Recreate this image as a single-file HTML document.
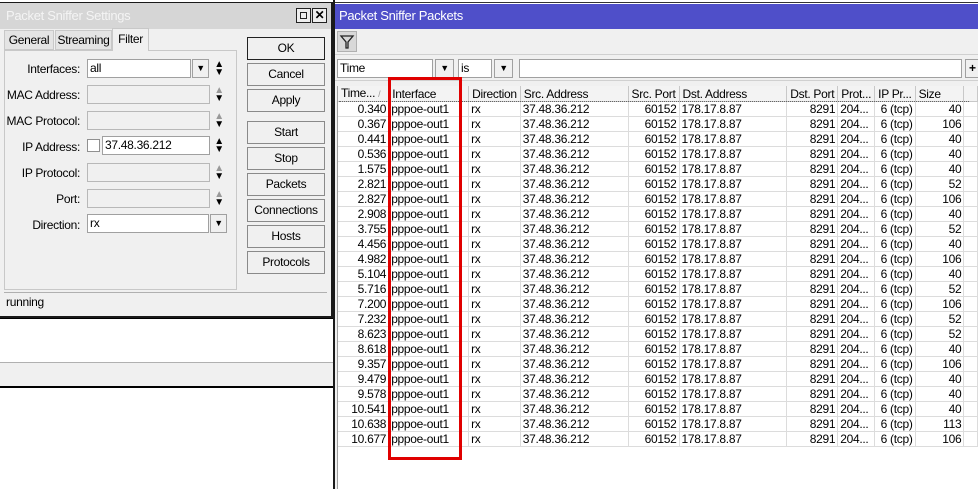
<!DOCTYPE html>
<html><head><meta charset="utf-8"><style>
*{box-sizing:border-box;margin:0;padding:0}
body{width:978px;height:489px;overflow:hidden;background:#fff;font-family:"Liberation Sans",sans-serif;font-size:12px;color:#000;position:relative;letter-spacing:-0.3px}
.a{position:absolute}
.btn{position:absolute;left:247px;width:78px;height:23px;border:1px solid #8a8a8a;background:#f0f0f0;text-align:center;line-height:21px}
.lbl{position:absolute;width:80px;text-align:right;left:0}
.fld{position:absolute;height:19px;border:1px solid #b8b8b8;background:#f0f0f0}
.fw{background:#fff;border-color:#a0a0a0;padding-left:2px;line-height:17px}
.dd{position:absolute;width:17px;height:19px;border:1px solid #a0a0a0;background:#f0f0f0;text-align:center;font-size:9px;line-height:17px}
.ud{position:absolute;font-size:10px;line-height:8px;width:12px;text-align:center}
table{border-collapse:collapse;position:absolute;left:338px;top:86px;table-layout:fixed}
td{height:15px;padding:0 2px;white-space:nowrap;overflow:hidden;border-right:1px solid #dcdcdc;border-bottom:1px solid #dcdcdc;line-height:14px}
th{height:15px;font-weight:normal;text-align:left;padding:0 3px;border-right:1px solid #c8c8c8;border-bottom:1px solid #c8c8c8;background:#f3f3f3;line-height:14px;white-space:nowrap;overflow:hidden}
.r{text-align:right}
</style></head><body>
<div class="a" style="left:0;top:318px;width:333px;height:1px;background:#000"></div>
<div class="a" style="left:0;top:362px;width:333px;height:25px;background:#f0f0f0;border-top:1px solid #b0b0b0"></div>
<div class="a" style="left:0;top:386px;width:333px;height:2px;background:#000"></div>

<div class="a" style="left:0;top:2px;width:333px;height:316px;background:#f0f0f0;border:2px solid #1a1a1a;border-left:none;border-top:1px solid #1a1a1a"></div>
<div class="a" style="left:0;top:3px;width:331px;height:26px;background:#d6d6d6;color:#f4f4f4;font-size:13px;line-height:26px;padding-left:6px">Packet Sniffer Settings</div>
<div class="a" style="left:296px;top:8px;width:15px;height:15px;border:1px solid #222;background:#eee"><div style="margin:3px;width:7px;height:7px;border:1px solid #222"></div></div>
<div class="a" style="left:312px;top:8px;width:15px;height:15px;border:1px solid #222;background:#eee;font-weight:bold;text-align:center;line-height:13px;font-size:12px">✕</div>
<div class="a" style="left:4px;top:30px;width:50px;height:20px;border:1px solid #c8c8c8;background:#e4e4e4;line-height:19px;text-align:center">General</div>
<div class="a" style="left:55px;top:30px;width:57px;height:20px;border:1px solid #c8c8c8;background:#e4e4e4;line-height:19px;text-align:center">Streaming</div>
<div class="a" style="left:112px;top:28px;width:37px;height:23px;border:1px solid #c8c8c8;border-bottom:none;background:#f0f0f0;line-height:20px;text-align:center">Filter</div>
<div class="a" style="left:4px;top:50px;width:233px;height:240px;border:1px solid #c8c8c8;border-top:none"></div>
<div class="a" style="left:4px;top:50px;width:108px;height:1px;background:#c8c8c8"></div>
<div class="a" style="left:149px;top:50px;width:88px;height:1px;background:#c8c8c8"></div>

<div class="lbl" style="top:62px">Interfaces:</div>
<div class="fld fw" style="left:87px;top:59px;width:104px">all</div>
<div class="dd" style="left:192px;top:59px">▼</div>
<div class="ud" style="left:213px;top:61px">▲<br>▼</div>

<div class="lbl" style="top:88px">MAC Address:</div>
<div class="fld" style="left:87px;top:85px;width:123px"></div>
<div class="ud" style="left:213px;top:87px;color:#999">▲<br><span style="color:#000">▼</span></div>

<div class="lbl" style="top:114px">MAC Protocol:</div>
<div class="fld" style="left:87px;top:111px;width:123px"></div>
<div class="ud" style="left:213px;top:113px;color:#999">▲<br><span style="color:#000">▼</span></div>

<div class="lbl" style="top:140px">IP Address:</div>
<div class="a" style="left:87px;top:139px;width:13px;height:13px;border:1px solid #909090;background:#fff"></div>
<div class="fld fw" style="left:102px;top:136px;width:108px">37.48.36.212</div>
<div class="ud" style="left:213px;top:138px">▲<br>▼</div>

<div class="lbl" style="top:166px">IP Protocol:</div>
<div class="fld" style="left:87px;top:163px;width:123px"></div>
<div class="ud" style="left:213px;top:165px;color:#999">▲<br><span style="color:#000">▼</span></div>

<div class="lbl" style="top:192px">Port:</div>
<div class="fld" style="left:87px;top:189px;width:123px"></div>
<div class="ud" style="left:213px;top:191px;color:#999">▲<br><span style="color:#000">▼</span></div>

<div class="lbl" style="top:218px">Direction:</div>
<div class="fld fw" style="left:87px;top:214px;width:122px">rx</div>
<div class="dd" style="left:210px;top:214px">▼</div>

<div class="btn" style="top:37px;border:1px solid #222">OK</div>
<div class="btn" style="top:63px">Cancel</div>
<div class="btn" style="top:89px">Apply</div>
<div class="btn" style="top:121px">Start</div>
<div class="btn" style="top:147px">Stop</div>
<div class="btn" style="top:173px">Packets</div>
<div class="btn" style="top:199px">Connections</div>
<div class="btn" style="top:225px">Hosts</div>
<div class="btn" style="top:251px">Protocols</div>

<div class="a" style="left:4px;top:292px;width:323px;height:20px;border-top:1px solid #b0b0b0;background:#f0f0f0;padding-left:2px;line-height:19px">running</div>

<div class="a" style="left:333px;top:0;width:645px;height:489px;background:#fff;border-left:2px solid #1a1a1a"></div>
<div class="a" style="left:335px;top:0;width:643px;height:3px;background:#fff;border-bottom:1px solid #333"></div>
<div class="a" style="left:335px;top:4px;width:643px;height:25px;background:#4f4fc9;color:#fff;font-size:13px;line-height:24px;padding-left:4px">Packet Sniffer Packets</div>
<div class="a" style="left:335px;top:29px;width:643px;height:57px;background:#f0f0f0"></div>
<div class="a" style="left:337px;top:31px;width:20px;height:21px;background:#d8d8d8;border:1px solid #b0b0b0"><svg width="18" height="19" viewBox="0 0 18 19"><path d="M3 4h12l-5 6v6h-2v-6z" fill="none" stroke="#222" stroke-width="1.3"/></svg></div>
<div class="a" style="left:335px;top:54px;width:643px;height:1px;background:#d0d0d0"></div>
<div class="fld fw" style="left:337px;top:59px;width:96px">Time</div>
<div class="dd" style="left:435px;top:59px;width:19px">▼</div>
<div class="fld fw" style="left:458px;top:59px;width:34px">is</div>
<div class="dd" style="left:494px;top:59px;width:19px">▼</div>
<div class="fld fw" style="left:519px;top:59px;width:443px"></div>
<div class="a" style="left:965px;top:59px;width:15px;height:19px;border:1px solid #a0a0a0;background:#f0f0f0;font-weight:bold;line-height:17px;padding-left:3px">+</div>
<div class="a" style="left:335px;top:80px;width:643px;height:1px;background:#d0d0d0"></div>
<div class="a" style="left:335px;top:86px;width:3px;height:403px;background:#f0f0f0;border-right:1px solid #a0a0a0"></div>

<table>
<colgroup><col style="width:51px"><col style="width:81px"><col style="width:50px"><col style="width:110px"><col style="width:51px"><col style="width:110px"><col style="width:49px"><col style="width:35px"><col style="width:40px"><col style="width:50px"><col style="width:14px"></colgroup>
<tr><th>Time... <span style="color:#999;font-size:9px">/</span></th><th>Interface</th><th>Direction</th><th>Src. Address</th><th>Src. Port</th><th>Dst. Address</th><th>Dst. Port</th><th>Prot...</th><th>IP Pr...</th><th>Size</th><th></th></tr>
<tr><td class="r">0.340</td><td>pppoe-out1</td><td>rx</td><td>37.48.36.212</td><td class="r">60152</td><td>178.17.8.87</td><td class="r">8291</td><td>204...</td><td class="r">6 (tcp)</td><td class="r">40</td><td></td></tr>
<tr><td class="r">0.367</td><td>pppoe-out1</td><td>rx</td><td>37.48.36.212</td><td class="r">60152</td><td>178.17.8.87</td><td class="r">8291</td><td>204...</td><td class="r">6 (tcp)</td><td class="r">106</td><td></td></tr>
<tr><td class="r">0.441</td><td>pppoe-out1</td><td>rx</td><td>37.48.36.212</td><td class="r">60152</td><td>178.17.8.87</td><td class="r">8291</td><td>204...</td><td class="r">6 (tcp)</td><td class="r">40</td><td></td></tr>
<tr><td class="r">0.536</td><td>pppoe-out1</td><td>rx</td><td>37.48.36.212</td><td class="r">60152</td><td>178.17.8.87</td><td class="r">8291</td><td>204...</td><td class="r">6 (tcp)</td><td class="r">40</td><td></td></tr>
<tr><td class="r">1.575</td><td>pppoe-out1</td><td>rx</td><td>37.48.36.212</td><td class="r">60152</td><td>178.17.8.87</td><td class="r">8291</td><td>204...</td><td class="r">6 (tcp)</td><td class="r">40</td><td></td></tr>
<tr><td class="r">2.821</td><td>pppoe-out1</td><td>rx</td><td>37.48.36.212</td><td class="r">60152</td><td>178.17.8.87</td><td class="r">8291</td><td>204...</td><td class="r">6 (tcp)</td><td class="r">52</td><td></td></tr>
<tr><td class="r">2.827</td><td>pppoe-out1</td><td>rx</td><td>37.48.36.212</td><td class="r">60152</td><td>178.17.8.87</td><td class="r">8291</td><td>204...</td><td class="r">6 (tcp)</td><td class="r">106</td><td></td></tr>
<tr><td class="r">2.908</td><td>pppoe-out1</td><td>rx</td><td>37.48.36.212</td><td class="r">60152</td><td>178.17.8.87</td><td class="r">8291</td><td>204...</td><td class="r">6 (tcp)</td><td class="r">40</td><td></td></tr>
<tr><td class="r">3.755</td><td>pppoe-out1</td><td>rx</td><td>37.48.36.212</td><td class="r">60152</td><td>178.17.8.87</td><td class="r">8291</td><td>204...</td><td class="r">6 (tcp)</td><td class="r">52</td><td></td></tr>
<tr><td class="r">4.456</td><td>pppoe-out1</td><td>rx</td><td>37.48.36.212</td><td class="r">60152</td><td>178.17.8.87</td><td class="r">8291</td><td>204...</td><td class="r">6 (tcp)</td><td class="r">40</td><td></td></tr>
<tr><td class="r">4.982</td><td>pppoe-out1</td><td>rx</td><td>37.48.36.212</td><td class="r">60152</td><td>178.17.8.87</td><td class="r">8291</td><td>204...</td><td class="r">6 (tcp)</td><td class="r">106</td><td></td></tr>
<tr><td class="r">5.104</td><td>pppoe-out1</td><td>rx</td><td>37.48.36.212</td><td class="r">60152</td><td>178.17.8.87</td><td class="r">8291</td><td>204...</td><td class="r">6 (tcp)</td><td class="r">40</td><td></td></tr>
<tr><td class="r">5.716</td><td>pppoe-out1</td><td>rx</td><td>37.48.36.212</td><td class="r">60152</td><td>178.17.8.87</td><td class="r">8291</td><td>204...</td><td class="r">6 (tcp)</td><td class="r">52</td><td></td></tr>
<tr><td class="r">7.200</td><td>pppoe-out1</td><td>rx</td><td>37.48.36.212</td><td class="r">60152</td><td>178.17.8.87</td><td class="r">8291</td><td>204...</td><td class="r">6 (tcp)</td><td class="r">106</td><td></td></tr>
<tr><td class="r">7.232</td><td>pppoe-out1</td><td>rx</td><td>37.48.36.212</td><td class="r">60152</td><td>178.17.8.87</td><td class="r">8291</td><td>204...</td><td class="r">6 (tcp)</td><td class="r">52</td><td></td></tr>
<tr><td class="r">8.623</td><td>pppoe-out1</td><td>rx</td><td>37.48.36.212</td><td class="r">60152</td><td>178.17.8.87</td><td class="r">8291</td><td>204...</td><td class="r">6 (tcp)</td><td class="r">52</td><td></td></tr>
<tr><td class="r">8.618</td><td>pppoe-out1</td><td>rx</td><td>37.48.36.212</td><td class="r">60152</td><td>178.17.8.87</td><td class="r">8291</td><td>204...</td><td class="r">6 (tcp)</td><td class="r">40</td><td></td></tr>
<tr><td class="r">9.357</td><td>pppoe-out1</td><td>rx</td><td>37.48.36.212</td><td class="r">60152</td><td>178.17.8.87</td><td class="r">8291</td><td>204...</td><td class="r">6 (tcp)</td><td class="r">106</td><td></td></tr>
<tr><td class="r">9.479</td><td>pppoe-out1</td><td>rx</td><td>37.48.36.212</td><td class="r">60152</td><td>178.17.8.87</td><td class="r">8291</td><td>204...</td><td class="r">6 (tcp)</td><td class="r">40</td><td></td></tr>
<tr><td class="r">9.578</td><td>pppoe-out1</td><td>rx</td><td>37.48.36.212</td><td class="r">60152</td><td>178.17.8.87</td><td class="r">8291</td><td>204...</td><td class="r">6 (tcp)</td><td class="r">40</td><td></td></tr>
<tr><td class="r">10.541</td><td>pppoe-out1</td><td>rx</td><td>37.48.36.212</td><td class="r">60152</td><td>178.17.8.87</td><td class="r">8291</td><td>204...</td><td class="r">6 (tcp)</td><td class="r">40</td><td></td></tr>
<tr><td class="r">10.638</td><td>pppoe-out1</td><td>rx</td><td>37.48.36.212</td><td class="r">60152</td><td>178.17.8.87</td><td class="r">8291</td><td>204...</td><td class="r">6 (tcp)</td><td class="r">113</td><td></td></tr>
<tr><td class="r">10.677</td><td>pppoe-out1</td><td>rx</td><td>37.48.36.212</td><td class="r">60152</td><td>178.17.8.87</td><td class="r">8291</td><td>204...</td><td class="r">6 (tcp)</td><td class="r">106</td><td></td></tr>
</table>
<div class="a" style="left:339px;top:101px;width:630px;height:0;border-top:1px dotted #666"></div>
<div class="a" style="left:388px;top:77px;width:74px;height:383px;border:3px solid #e00000"></div>
</body></html>
